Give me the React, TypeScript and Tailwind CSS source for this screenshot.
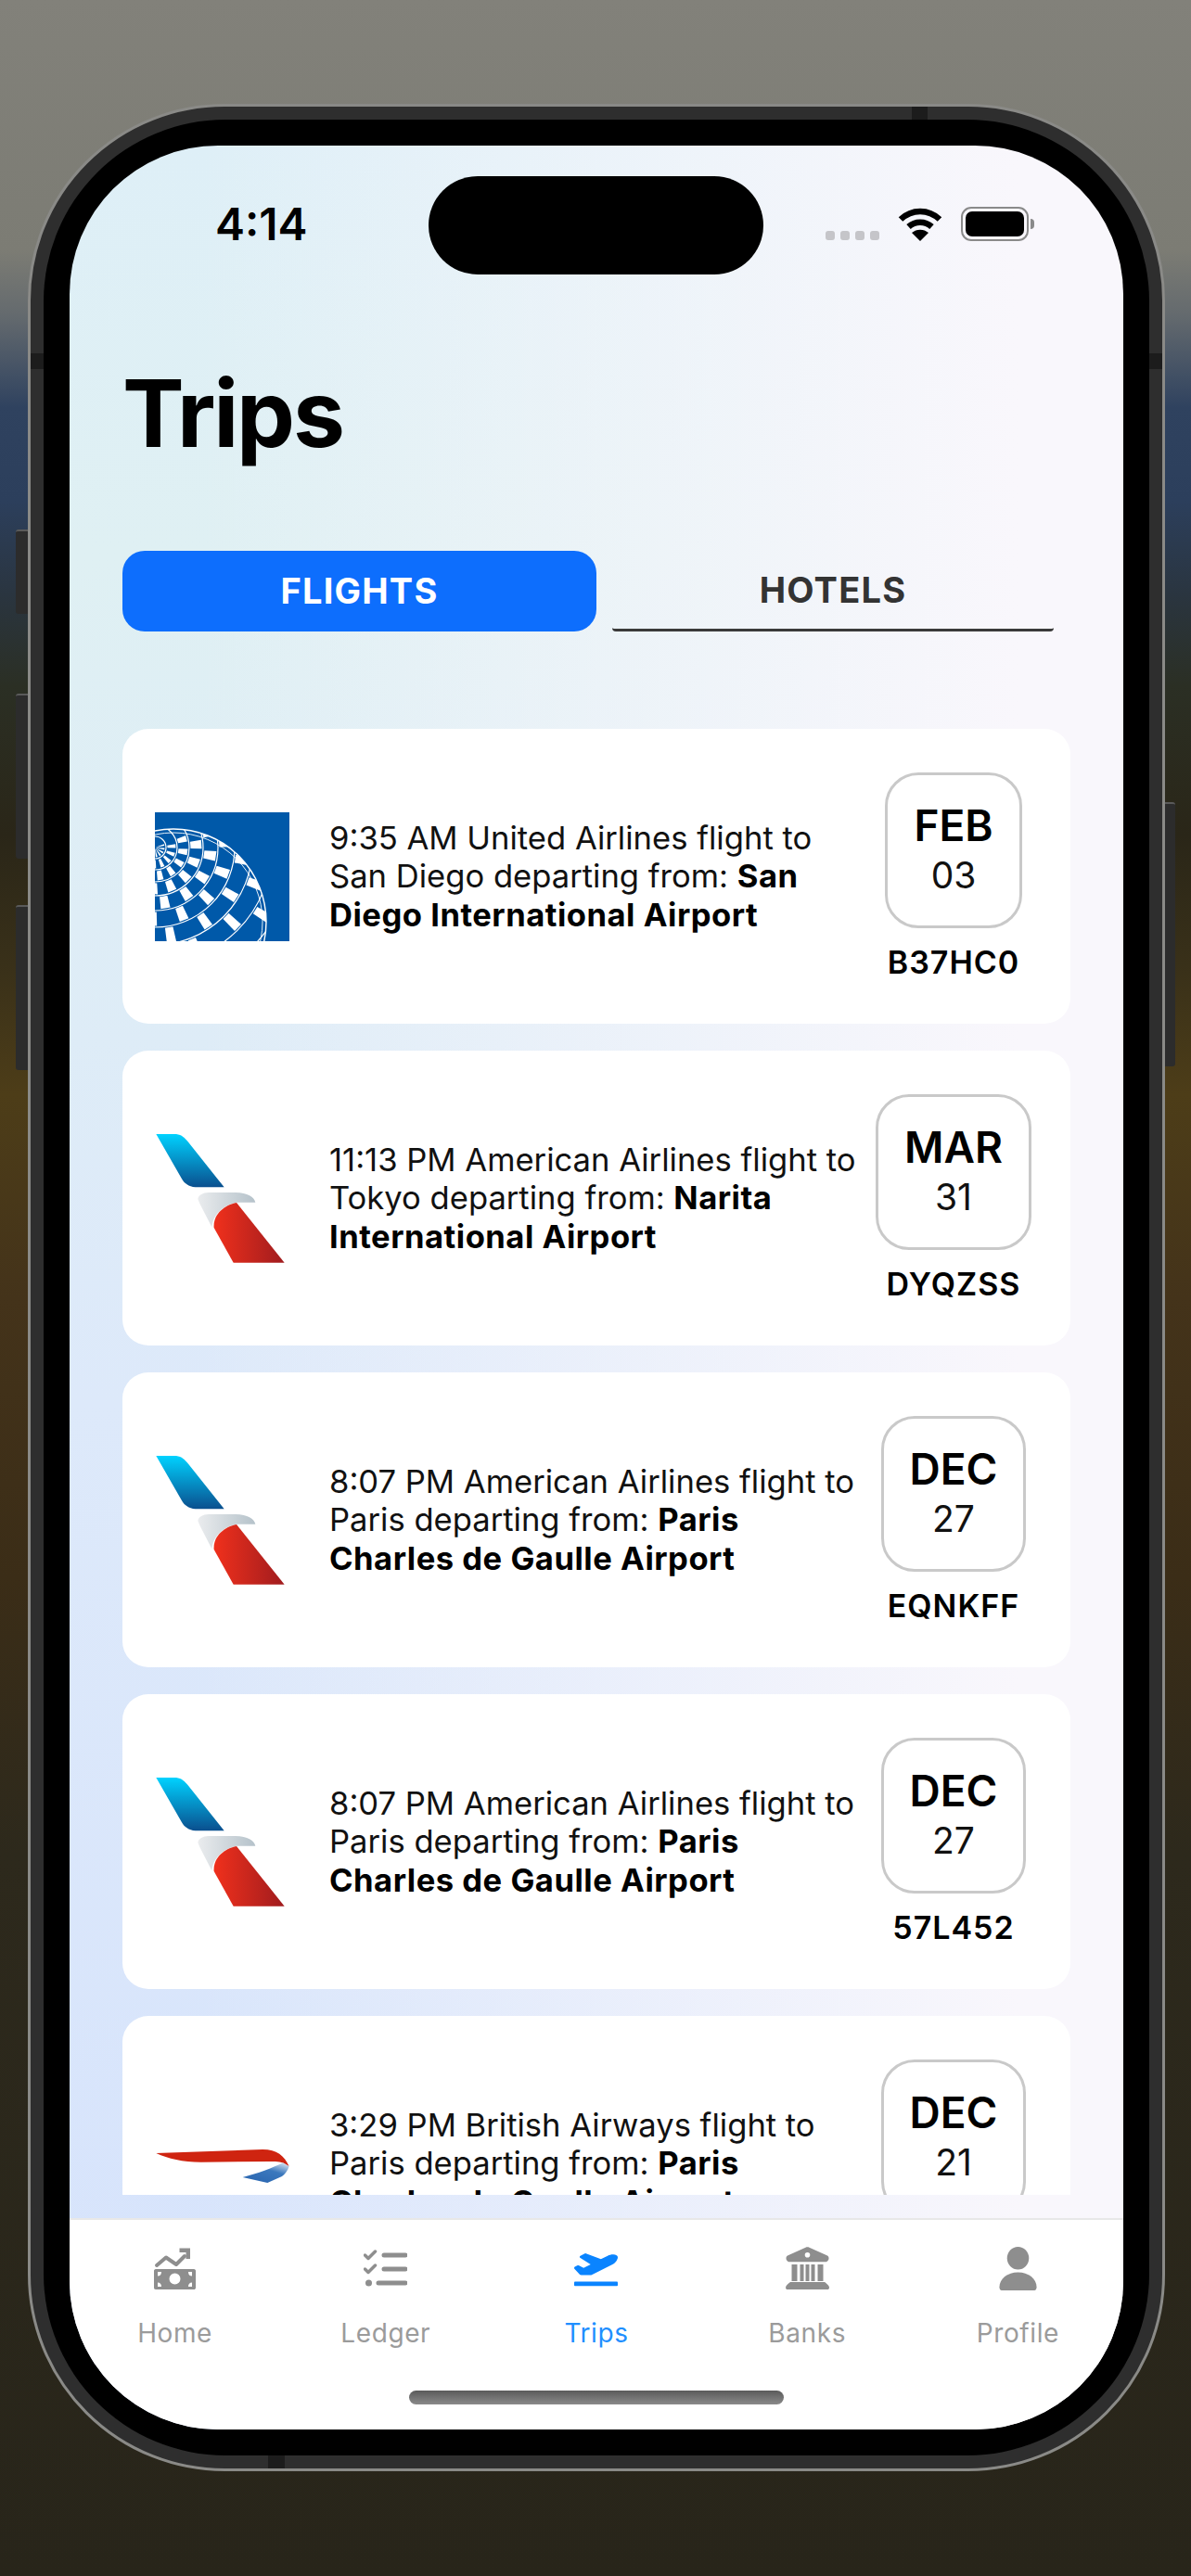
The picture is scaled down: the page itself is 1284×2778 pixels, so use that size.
import React from "react";
import { FaPlaneDeparture } from "react-icons/fa";

function UnitedLogo() {
  const px = 0, py = 38;
  const radii = [0, 12, 24, 37, 52, 68, 86, 105, 126, 150];
  const step = 12;
  const cells: React.ReactNode[] = [];
  const pt = (r: number, deg: number) => {
    const a = (deg * Math.PI) / 180;
    return `${(px + r * Math.cos(a)).toFixed(1)} ${(py + r * Math.sin(a)).toFixed(1)}`;
  };
  for (let i = 0; i < radii.length - 1; i++) {
    for (let j = 0; j < 10; j++) {
      if ((i + j) % 2 !== 0) continue;
      const mid = -16 + j * step;
      const r0 = radii[i] + 1.5;
      const r1 = radii[i + 1] - 1.5;
      const rm = (r0 + r1) / 2 || 1;
      const half = Math.min(step * 0.45, ((7.5 / rm) * 180) / Math.PI / 1.6);
      cells.push(
        <path key={`${i}-${j}`} d={`M${pt(r0, mid - half)}L${pt(r1, mid - half)}L${pt(r1, mid + half)}L${pt(r0, mid + half)}Z`} fill="#fff" />
      );
    }
  }
  return (
    <svg viewBox="0 0 145 139" className="w-[145px] h-[139px] shrink-0">
      <defs>
        <clipPath id="u-globe">
          <circle cx="20" cy="118" r="100" />
        </clipPath>
      </defs>
      <rect width="145" height="139" fill="#0059a9" />
      <g clipPath="url(#u-globe)">
        {cells}
        {radii.slice(1).map((r) => (
          <circle key={r} cx={px} cy={py} r={r} fill="none" stroke="#fff" strokeWidth="1.2" />
        ))}
      </g>
      <circle cx="20" cy="118" r="100" fill="none" stroke="#fff" strokeWidth="1.4" />
      <circle cx="20" cy="118" r="96" fill="none" stroke="#fff" strokeWidth="0.9" />
    </svg>
  );
}

function AmericanLogo({ id }: { id: string }) {
  return (
    <svg viewBox="81 75 435 417" className="w-[145px] h-[139px] shrink-0">
      <defs>
        <linearGradient id={`${id}b`} x1="0" y1="0" x2="0" y2="1">
          <stop offset="0" stopColor="#00d2ff" />
          <stop offset="1" stopColor="#0a4f8e" />
        </linearGradient>
        <linearGradient id={`${id}g`} x1="0" y1="0" x2="1" y2="0">
          <stop offset="0" stopColor="#eaecee" />
          <stop offset="1" stopColor="#b5c2ca" />
        </linearGradient>
        <linearGradient id={`${id}r`} x1="0" y1="0" x2="1" y2="0">
          <stop offset="0" stopColor="#f0301c" />
          <stop offset="1" stopColor="#a01c1e" />
        </linearGradient>
      </defs>
      <path d="M85 75H150C168 77 178 88 188 100L305 247H212C190 245 176 235 168 220Z" fill={`url(#${id}b)`} />
      <path d="M220 285C222 272 236 265 255 264H340C380 264 402 278 406 296H345C298 305 268 340 265 376L226 300Z" fill={`url(#${id}g)`} />
      <path d="M345 297L500 491H335L272 378C268 335 305 305 345 297Z" fill={`url(#${id}r)`} />
    </svg>
  );
}

function BritishLogo() {
  return (
    <svg viewBox="51 -42 435 417" className="w-[145px] h-[139px] shrink-0">
      <defs>
        <linearGradient id="ba-b" x1="0.2" y1="1" x2="0.9" y2="0">
          <stop offset="0" stopColor="#2a66b0" />
          <stop offset="0.6" stopColor="#3b78bd" />
          <stop offset="1" stopColor="#d7e2ef" />
        </linearGradient>
      </defs>
      <path d="M55 132L400 120C445 120 470 140 485 175C465 158 445 158 420 159L200 161C140 161 95 150 55 132Z" fill="#cf2410" />
      <path d="M335 210C385 198 430 180 465 163L485 175C480 190 472 200 462 207L415 228Z" fill="url(#ba-b)" />
    </svg>
  );
}

function HomeIcon({ className }: { className: string }) {
  return (
    <svg viewBox="0 0 47 47" className={className} fill="currentColor">
      <path d="M4 20L14 11.5L25 19L34 10" fill="none" stroke="currentColor" strokeWidth="4" strokeLinecap="round" strokeLinejoin="round" />
      <path d="M28.5 1.5H40V13L35.5 13V6H28.5Z" />
      <path fillRule="evenodd" d="M3 24H44C45.5 24 46 25 46 26V44C46 45.5 45 46 44 46H3C1.500 46 1 45 1 44V26C1 25 1.500 24 3 24ZM23.500 28.500A6 6 0 1 0 23.500 40.500A6 6 0 1 0 23.500 28.500ZM5 27V31.500C7.500 31.500 9 30 9 27ZM38 27C38 30 39.500 31.500 42 31.500V27ZM5 38.500V43H9C9 40 7.500 38.500 5 38.500ZM42 38.500C39.500 38.500 38 40 38 43H42Z" />
    </svg>
  );
}

function LedgerIcon({ className }: { className: string }) {
  return (
    <svg viewBox="0 0 47 47" className={className} fill="none" stroke="currentColor" strokeLinecap="round" strokeLinejoin="round">
      <path d="M1.500 9L5 12.500L12.500 5" strokeWidth="3.500" />
      <path d="M1.500 24L5 27.500L12.500 20" strokeWidth="3.500" />
      <circle cx="5.500" cy="39" r="3.500" fill="currentColor" stroke="none" />
      <path d="M22 9H45M22 24H45M16 39H45" strokeWidth="5" />
    </svg>
  );
}

function BankIcon({ className }: { className: string }) {
  return (
    <svg viewBox="0 0 47 47" className={className} fill="currentColor">
      <path fillRule="evenodd" d="M21.500 0.800C22.800 0.200 24.200 0.200 25.500 0.800L45 9.500C47 10.500 47 14 45 15.500C44.500 16 44 16.200 43 16.200H4C3 16.200 2.500 16 2 15.500C0 14 0 10.500 2 9.500ZM23.500 6A2.800 2.800 0 1 0 23.500 11.600A2.800 2.800 0 1 0 23.500 6Z" />
      <path d="M6.500 19H12.500V37H6.500ZM15.500 19H19.500V37H15.500ZM21.500 19H25.500V37H21.500ZM27.500 19H31.500V37H27.500ZM34.500 19H40.500V37H34.500Z" />
      <path d="M5 38H42C44 39.500 47 41.500 47 44C47 45.500 46 46 45 46H2C1 46 0 45.500 0 44C0 41.500 3 39.500 5 38Z" />
    </svg>
  );
}

function ProfileIcon({ className }: { className: string }) {
  return (
    <svg viewBox="0 0 41 48" className={className} fill="currentColor">
      <ellipse cx="20.500" cy="12.500" rx="12" ry="12.500" />
      <path d="M20.500 28C32 28 41 35 41 44.500C41 46.500 40 48 38.500 48H2.500C1 48 0 46.500 0 44.500C0 35 9 28 20.500 28Z" />
    </svg>
  );
}

function Wifi() {
  return (
    <svg viewBox="0 0 48 37" className="w-[48px] h-[37px]" fill="none" stroke="#000" strokeWidth="6.500">
      <path d="M3 13.500C15 2 33 2 45 13.500" />
      <path d="M11.500 21.500C18.500 15 29.500 15 36.500 21.500" />
      <path d="M24 37L15 28C20 23.500 28 23.500 33 28Z" fill="#000" stroke="none" />
    </svg>
  );
}

type Trip = {
  logo: React.ReactNode;
  lead: React.ReactNode;
  bold: React.ReactNode;
  month: string;
  day: string;
  code: string;
};

const trips: Trip[] = [
  {
    logo: <UnitedLogo />,
    lead: <>9:35 AM United Airlines flight to<br />San Diego departing from: </>,
    bold: <>San<br />Diego International Airport</>,
    month: "FEB",
    day: "03",
    code: "B37HC0",
  },
  {
    logo: <AmericanLogo id="aa1" />,
    lead: <>11:13 PM American Airlines flight to<br />Tokyo departing from: </>,
    bold: <>Narita<br />International Airport</>,
    month: "MAR",
    day: "31",
    code: "DYQZSS",
  },
  {
    logo: <AmericanLogo id="aa2" />,
    lead: <>8:07 PM American Airlines flight to<br />Paris departing from: </>,
    bold: <>Paris<br />Charles de Gaulle Airport</>,
    month: "DEC",
    day: "27",
    code: "EQNKFF",
  },
  {
    logo: <AmericanLogo id="aa3" />,
    lead: <>8:07 PM American Airlines flight to<br />Paris departing from: </>,
    bold: <>Paris<br />Charles de Gaulle Airport</>,
    month: "DEC",
    day: "27",
    code: "57L452",
  },
  {
    logo: <BritishLogo />,
    lead: <>3:29 PM British Airways flight to<br />Paris departing from: </>,
    bold: <>Paris<br />Charles de Gaulle Airport</>,
    month: "DEC",
    day: "21",
    code: "",
  },
];

function TripCard({ trip }: { trip: Trip }) {
  return (
    <div className="h-[318px] shrink-0 rounded-[28px] bg-white flex items-center pl-[35px] pr-[41px]">
      {trip.logo}
      <p className="ml-[43px] flex-1 whitespace-nowrap text-[34.6px] leading-[41.5px] text-[#111]">
        {trip.lead}
        <span className="font-bold tracking-[0.5px] text-black">{trip.bold}</span>
      </p>
      <div className="w-[170px] shrink-0 flex flex-col items-center">
        <div className="h-[168px] px-[28px] rounded-[36px] border-[3px] border-[#c9c9c9] flex flex-col items-center justify-center">
          <span className="text-[46px] leading-[54px] font-semibold text-black">{trip.month}</span>
          <span className="text-[39px] leading-[54px] text-[#111]">{trip.day}</span>
        </div>
        <div className="mt-[16px] h-[41px] text-[34px] leading-[41px] font-semibold tracking-[1px] text-black">{trip.code}</div>
      </div>
    </div>
  );
}

const tabs = [
  { label: "Home", Icon: HomeIcon, size: "w-[47px] h-[47px]" },
  { label: "Ledger", Icon: LedgerIcon, size: "w-[47px] h-[47px]" },
  { label: "Trips", Icon: FaPlaneDeparture as unknown as typeof HomeIcon, size: "w-[47px] h-[47px]" },
  { label: "Banks", Icon: BankIcon, size: "w-[47px] h-[47px]" },
  { label: "Profile", Icon: ProfileIcon, size: "w-[41px] h-[47px]" },
];

export default function App() {
  return (
    <div className="w-[1284px] h-[2778px] overflow-hidden pt-[112px] pl-[30px] font-['Inter','Liberation_Sans',sans-serif] bg-[linear-gradient(180deg,#82817a_0px,#7c7c74_270px,#646a6e_340px,#2f425f_440px,#2c3f5c_540px,#2a3540_640px,#2b2f24_740px,#2a2618_900px,#3a3119_1050px,#4d3d18_1180px,#44331a_1400px,#3b2d17_1700px,#2d291c_2000px,#28251a_2778px)]">
      <div className="relative w-[1226px] h-[2553px]">
        {/* side buttons */}
        <div className="absolute left-[-13px] top-[459px] w-[13px] h-[91px] rounded-l-[3px] border-t-[2px] border-[#5a5a5a] bg-[#2c2c2c]" />
        <div className="absolute left-[-13px] top-[636px] w-[13px] h-[178px] rounded-l-[3px] border-t-[2px] border-[#5a5a5a] bg-[#2c2c2c]" />
        <div className="absolute left-[-13px] top-[864px] w-[13px] h-[178px] rounded-l-[3px] border-t-[2px] border-[#5a5a5a] bg-[#2c2c2c]" />
        <div className="absolute right-[-11px] top-[753px] w-[11px] h-[285px] rounded-r-[3px] border-t-[2px] border-[#5a5a5a] bg-[#2c2c2c]" />

        {/* frame */}
        <div className="relative w-full h-full rounded-[212px] border-[3px] border-[#8a8a87] bg-[#2e2e2e] p-[14px]">
          <div className="absolute left-[950px] top-0 w-[17px] h-[14px] bg-[#1c1c1c]" />
          <div className="absolute left-[256px] bottom-0 w-[18px] h-[14px] bg-[#1c1c1c]" />
          <div className="absolute left-0 top-[266px] w-[14px] h-[17px] bg-[#1c1c1c]" />
          <div className="absolute right-0 top-[266px] w-[14px] h-[17px] bg-[#1c1c1c]" />

          <div className="w-full h-full rounded-[196px] bg-black p-[28px]">
            {/* screen */}
            <div className="relative w-full h-full rounded-[160px] overflow-hidden flex flex-col bg-[linear-gradient(90deg,transparent_12%,#f9f7fc_90%),linear-gradient(180deg,#deeff7_0%,#dff0f3_18%,#dde9fa_55%,#d6e3fc_100%)]">
              {/* dynamic island */}
              <div className="absolute left-[387px] top-[33px] w-[361px] h-[106px] rounded-[53px] bg-black" />

              {/* status bar */}
              <div className="h-[190px] shrink-0 flex items-start justify-between pl-[157px] pr-[96px] pt-[57px]">
                <span className="text-[48px] leading-[56px] font-semibold text-black">4:14</span>
                <div className="flex items-end gap-[20px] pt-[9px]">
                  <div className="flex gap-[6px] pb-[1px]">
                    <span className="w-[10px] h-[10px] rounded-[3px] bg-[#c5c5c9]" />
                    <span className="w-[10px] h-[10px] rounded-[3px] bg-[#c5c5c9]" />
                    <span className="w-[10px] h-[10px] rounded-[3px] bg-[#c5c5c9]" />
                    <span className="w-[10px] h-[10px] rounded-[3px] bg-[#c5c5c9]" />
                  </div>
                  <Wifi />
                  <div className="flex items-center">
                    <div className="w-[73px] h-[37px] rounded-[11px] border-[2px] border-[#8a8a8a] p-[3px]">
                      <div className="w-full h-full rounded-[7px] bg-black" />
                    </div>
                    <div className="ml-[2px] w-[4px] h-[11px] rounded-r-[4px] bg-[#8a8a8a]" />
                  </div>
                </div>
              </div>

              {/* title */}
              <h1 className="ml-[57px] h-[110px] mt-[44px] shrink-0 text-[100px] leading-[110px] font-bold tracking-[-2.2px] text-black">Trips</h1>

              {/* tabs */}
              <div className="mt-[93px] h-[87px] shrink-0 mx-[57px] flex gap-[17px]">
                <div className="w-[511px] rounded-[24px] bg-[#0d6efd] flex items-center justify-center text-[38px] tracking-[1.2px] font-bold text-white">FLIGHTS</div>
                <div className="w-[476px] rounded-b-[4px] border-b-[3px] border-[#3a3a3a] flex items-center justify-center text-[38px] tracking-[1.2px] font-bold text-[#333]">HOTELS</div>
              </div>

              {/* list */}
              <div className="mt-[105px] mx-[57px] h-[1581px] shrink-0 overflow-hidden flex flex-col gap-[29px]">
                {trips.map((t, i) => (
                  <TripCard key={i} trip={t} />
                ))}
              </div>

              <div className="flex-1" />

              {/* tab bar */}
              <div className="h-[228px] shrink-0 bg-white border-t-[2px] border-[#e8e8e8]">
                <div className="grid grid-cols-5 pt-[29px]">
                  {tabs.map(({ label, Icon, size }) => {
                    const active = label === "Trips";
                    return (
                      <div key={label} className={`flex flex-col items-center ${active ? "text-[#0a84ff]" : "text-[#8e8e8e]"}`}>
                        <div className="h-[47px] flex items-center">
                          <Icon className={size} />
                        </div>
                        <span className={`mt-[29px] text-[28px] leading-[34px] tracking-[0.6px] ${active ? "text-[#1f8fff]" : "text-[#9b9b9b]"}`}>{label}</span>
                      </div>
                    );
                  })}
                </div>
                <div className="mx-auto mt-[45px] w-[404px] h-[15px] rounded-[8px] bg-[linear-gradient(180deg,#5a5a5a,#8a8a8a)]" />
              </div>
            </div>
          </div>
        </div>
      </div>
    </div>
  );
}
